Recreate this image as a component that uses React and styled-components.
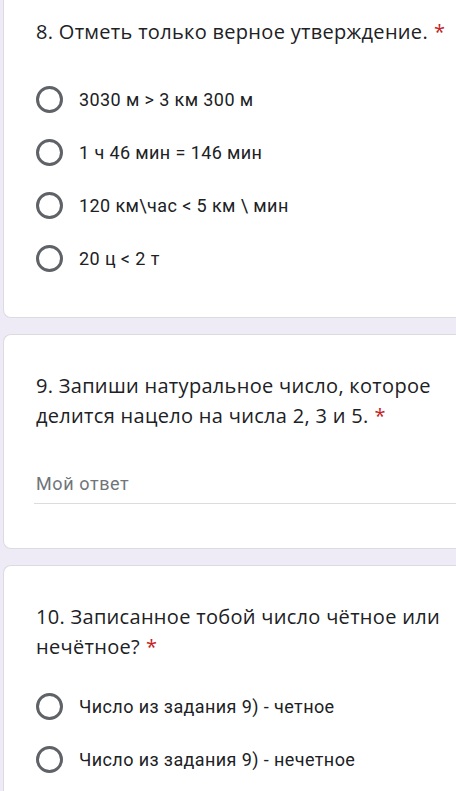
import React from "react";
import styled, { createGlobalStyle } from "styled-components";

const Global = createGlobalStyle`
  html, body { margin: 0; padding: 0; }
  body { background: #eeebf6; overflow: hidden; }
`;

const Page = styled.div`
  width: 456px;
  height: 791px;
  overflow: hidden;
  padding-left: 3px;
  box-sizing: border-box;
  display: flex;
  flex-direction: column;
  gap: 16px;
`;

const Card = styled.section`
  background: #fff;
  border: 1px solid #dadce0;
  border-right: none;
  border-top: ${(p) => (p.$cut ? "none" : "1px solid #dadce0")};
  border-radius: ${(p) => (p.$cut ? "0 0 0 8px" : "8px 0 0 8px")};
  margin-right: -10px;
  padding: ${(p) => p.$pad};
  display: flex;
  flex-direction: column;
`;

const Title = styled.div`
  font-family: "Open Sans", Roboto, sans-serif;
  font-size: 20px;
  line-height: 30px;
  color: #202124;
  letter-spacing: 0.3px;
  margin-bottom: ${(p) => p.$gap}px;
`;

const Star = styled.span`
  color: #c5221f;
  margin-left: 6px;
`;

const Options = styled.div`
  display: flex;
  flex-direction: column;
`;

const OptionRow = styled.label`
  display: flex;
  align-items: center;
  height: 53px;
  gap: 16px;
`;

const Radio = styled.span`
  width: 27px;
  height: 27px;
  box-sizing: border-box;
  border: 3px solid #5f6368;
  border-radius: 50%;
  flex: none;
`;

const OptionText = styled.span`
  font-family: Roboto, sans-serif;
  font-size: 18px;
  letter-spacing: 0.4px;
  color: #202124;
`;

const Answer = styled.div`
  font-family: Roboto, sans-serif;
  font-size: 18px;
  letter-spacing: 0.6px;
  color: #70757a;
  padding-bottom: 9px;
  border-bottom: 1px solid #dadce0;
  margin-left: -2px;
  padding-left: 2px;
`;

const Question = ({ title, gap, children }) => (
  <>
    <Title $gap={gap}>
      {title}
      <Star>*</Star>
    </Title>
    {children}
  </>
);

const OptionList = ({ items }) => (
  <Options>
    {items.map((t) => (
      <OptionRow key={t}>
        <Radio />
        <OptionText>{t}</OptionText>
      </OptionRow>
    ))}
  </Options>
);

export default function App() {
  return (
    <>
      <Global />
      <Page>
        <Card $cut $pad="17px 0 32px 32px">
          <Question title="8. Отметь только верное утверждение." gap={26}>
            <OptionList
              items={[
                "3030 м > 3 км 300 м",
                "1 ч 46 мин = 146 мин",
                "120 км\\час < 5 км \\ мин",
                "20 ц < 2 т",
              ]}
            />
          </Question>
        </Card>
        <Card $pad="36px 0 44px 32px">
          <Question title="9. Запиши натуральное число, которое делится нацело на числа 2, 3 и 5." gap={42}>
            <Answer>Мой ответ</Answer>
          </Question>
        </Card>
        <Card $pad="36px 0 32px 32px">
          <Question title="10. Записанное тобой число чётное или нечётное?" gap={18}>
            <OptionList
              items={["Число из задания 9) - четное", "Число из задания 9) - нечетное"]}
            />
          </Question>
        </Card>
      </Page>
    </>
  );
}
